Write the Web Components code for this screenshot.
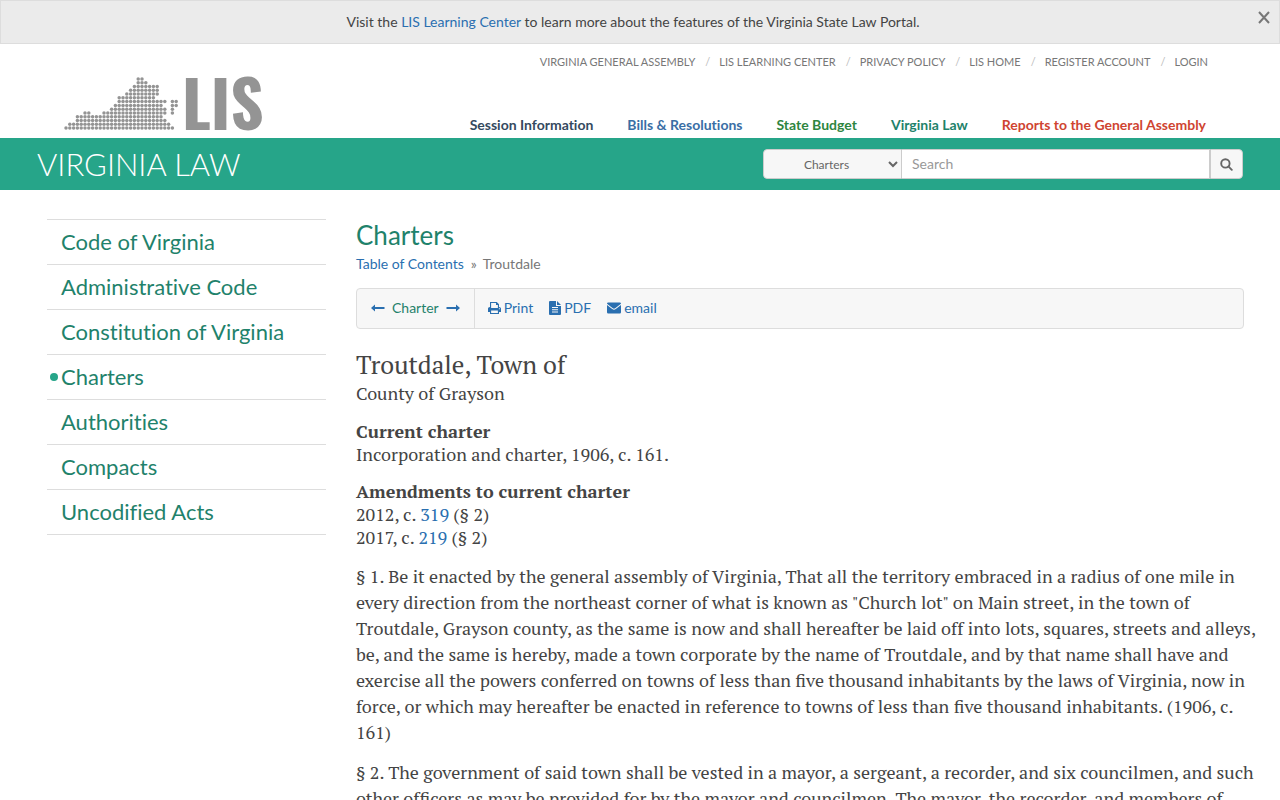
<!DOCTYPE html>
<html lang="en">
<head>
<meta charset="utf-8">
<meta name="viewport" content="width=device-width, initial-scale=1">
<title>Troutdale, Town of - Virginia Law</title>
<style>
body {
    margin: 0;
    background-color: #ffffff;
    color: #444444;
    font-family: Lato, sans-serif;
    font-size: 14px;
    font-variant-ligatures: none;
    line-height: 20px;
}
</style>
</head>
<body>

<notice-banner>Visit the <a href="#learn">LIS Learning Center</a> to learn more about the features of the Virginia State Law Portal.</notice-banner>

<site-header>
    <a slot="utility" href="#vga">Virginia General Assembly</a>
    <a slot="utility" href="#learn">LIS Learning Center</a>
    <a slot="utility" href="#privacy">Privacy Policy</a>
    <a slot="utility" href="#home">LIS Home</a>
    <a slot="utility" href="#register">Register Account</a>
    <a slot="utility" href="#login">Login</a>
    <a slot="portal" href="#session" style="color: #34495e">Session Information</a>
    <a slot="portal" href="#bills" style="color: #3a6ea5">Bills &amp; Resolutions</a>
    <a slot="portal" href="#budget" style="color: #2e8540">State Budget</a>
    <a slot="portal" href="#law" style="color: #1f826b">Virginia Law</a>
    <a slot="portal" href="#reports" style="color: #cf4431">Reports to the General Assembly</a>
</site-header>

<search-bar heading="VIRGINIA LAW"></search-bar>

<page-layout>
    <side-menu slot="side">
        <menu-item href="#code">Code of Virginia</menu-item>
        <menu-item href="#admin">Administrative Code</menu-item>
        <menu-item href="#constitution">Constitution of Virginia</menu-item>
        <menu-item href="#charters" active>Charters</menu-item>
        <menu-item href="#authorities">Authorities</menu-item>
        <menu-item href="#compacts">Compacts</menu-item>
        <menu-item href="#acts">Uncodified Acts</menu-item>
    </side-menu>
    <page-title>
        Charters
        <a slot="crumb" href="#toc">Table of Contents</a>
        <span slot="crumb">Troutdale</span>
    </page-title>
    <doc-toolbar></doc-toolbar>
    <charter-text>
        <h2 slot="title">Troutdale, Town of</h2>
        <span slot="place">County of Grayson</span>
        <charter-note label="Current charter">Incorporation and charter, 1906, c. 161.</charter-note>
        <charter-note label="Amendments to current charter">2012, c. <a href="#319">319</a> (§ 2)<br>2017, c. <a href="#219">219</a> (§ 2)</charter-note>
        <p>§ 1. Be it enacted by the general assembly of Virginia, That all the territory embraced in a radius of one mile in every direction from the northeast corner of what is known as "Church lot" on Main street, in the town of Troutdale, Grayson county, as the same is now and shall hereafter be laid off into lots, squares, streets and alleys, be, and the same is hereby, made a town corporate by the name of Troutdale, and by that name shall have and exercise all the powers conferred on towns of less than five thousand inhabitants by the laws of Virginia, now in force, or which may hereafter be enacted in reference to towns of less than five thousand inhabitants. (1906, c. 161)</p>
        <p>§ 2. The government of said town shall be vested in a mayor, a sergeant, a recorder, and six councilmen, and such other officers as may be provided for by the mayor and councilmen. The mayor, the recorder, and members of</p>
    </charter-text>
</page-layout>

<script>
function attach(host, html) {
    const template = document.createElement('template');
    template.innerHTML = html;
    const shadow = host.attachShadow({ mode: 'open' });
    shadow.append(template.content.cloneNode(true));
    return shadow;
}

class NoticeBanner extends HTMLElement {
    constructor() {
        super();
        const shadow = attach(this, `
<style>
:host {
    display: flex;
    align-items: flex-start;
    box-sizing: border-box;
    height: 44px;
    padding: 11px 8px 0;
    background-color: #ebebeb;
    border: 1px solid #dddddd;
}
:host([hidden]) {
    display: none;
}
p {
    flex: 1;
    margin: 0;
    text-align: center;
}
::slotted(a) {
    color: #2a6fb0;
    text-decoration: none;
}
button {
    padding: 0;
    margin-top: -2px;
    border: none;
    background: none;
    color: #777777;
    line-height: 0;
}
</style>
<p><slot></slot></p>
<button type="button" aria-label="Close">
    <svg width="14" height="14" viewBox="0 0 14 14" fill="none" stroke="currentColor" stroke-width="2"><path d="M2 2 12 13M12 2 2 13"/></svg>
</button>
`);
        shadow.querySelector('button').addEventListener('click', () => {
            this.hidden = true;
        });
    }
}

// [row, first column, last column] of each run of dots
const MAP_RUNS = [
    [0, 19, 20], [1, 19, 21], [2, 18, 24], [3, 17, 24], [4, 16, 24],
    [5, 14, 23], [6, 14, 26], [6, 28, 29], [7, 13, 25], [7, 28, 29],
    [8, 12, 26], [8, 28, 28], [9, 5, 6], [9, 10, 26], [9, 28, 28],
    [10, 3, 25], [11, 3, 26], [12, 1, 27], [13, 0, 28]
];

class LisLogo extends HTMLElement {
    constructor() {
        super();
        const shadow = attach(this, `
<style>
:host {
    display: block;
}
svg {
    display: block;
    overflow: visible;
}
text {
    font: bold 65px Oswald, "Liberation Sans", sans-serif;
}
</style>
<svg width="206" height="56" viewBox="0 0 206 56" fill="#949494" role="img" aria-label="LIS">
    <g></g>
    <text x="118" y="54">LIS</text>
</svg>
`);
        const dots = MAP_RUNS.map(([row, from, to]) => {
            let run = '';
            for (let col = from; col <= to; col++) {
                run += `<circle cx="${2 + col * 3.8}" cy="${3 + row * 3.77}" r="1.75"/>`;
            }
            return run;
        });
        shadow.querySelector('g').innerHTML = dots.join('');
    }
}

class SiteHeader extends HTMLElement {
    constructor() {
        super();
        attach(this, `
<style>
:host {
    display: flex;
    justify-content: space-between;
    box-sizing: border-box;
    height: 94px;
    padding: 8px 74px 0 64px;
}
lis-logo {
    margin-top: 24px;
}
.links {
    display: flex;
    flex-direction: column;
    justify-content: space-between;
    align-items: flex-end;
}
nav {
    display: flex;
    white-space: nowrap;
}
.utility {
    margin-right: -2px;
    font-size: 11px;
    text-transform: uppercase;
}
.portal {
    gap: 34px;
    padding-bottom: 3px;
    font-weight: bold;
}
::slotted(a) {
    text-decoration: none;
}
::slotted(a[slot='utility']) {
    color: #777777;
}
::slotted(a[slot='utility']:not(:first-child))::before {
    content: '/';
    padding: 0 9px 0 10px;
    color: #bbbbbb;
}
</style>
<lis-logo></lis-logo>
<div class="links">
    <nav class="utility" aria-label="Site"><slot name="utility"></slot></nav>
    <nav class="portal" aria-label="Portals"><slot name="portal"></slot></nav>
</div>
`);
    }
}

class SearchBar extends HTMLElement {
    constructor() {
        super();
        const shadow = attach(this, `
<style>
:host {
    display: flex;
    align-items: center;
    justify-content: space-between;
    box-sizing: border-box;
    height: 52px;
    padding: 0 37px;
    background-color: #26a589;
}
h1 {
    margin: 0;
    color: #ffffff;
    font-size: 31px;
    font-weight: 300;
    line-height: 40px;
}
form {
    display: flex;
    width: 480px;
    height: 30px;
    border-radius: 4px;
    overflow: hidden;
}
select,
input,
button {
    box-sizing: border-box;
    height: 30px;
    margin: 0;
    border: 1px solid #cccccc;
    border-radius: 0;
    font-family: inherit;
}
select {
    width: 139px;
    padding: 0;
    background-color: #f7f7f7;
    border-radius: 4px 0 0 4px;
    color: #666666;
    font-size: 12px;
    text-align: center;
}
input {
    flex: 1;
    min-width: 0;
    padding: 0 10px 2px;
    border-left: none;
    background-color: #ffffff;
    font-size: 14px;
}
input::placeholder {
    color: #999999;
}
button {
    display: flex;
    align-items: center;
    justify-content: center;
    width: 33px;
    padding: 0;
    background-color: #f7f7f7;
    border-radius: 0 4px 4px 0;
    color: #666666;
}
</style>
<h1></h1>
<form role="search">
    <select aria-label="Collection"><option>Charters</option></select>
    <input type="text" placeholder="Search" aria-label="Search">
    <button type="submit" aria-label="Run search">
        <svg width="13" height="13" viewBox="0 0 13 13" fill="none" stroke="currentColor" stroke-width="1.9"><circle cx="5.4" cy="5.4" r="4.2"/><path d="m8.4 8.4 3.4 3.4" stroke-linecap="round"/></svg>
    </button>
</form>
`);
        shadow.querySelector('form').addEventListener('submit', (e) => e.preventDefault());
        shadow.querySelector('h1').textContent = this.getAttribute('heading');
    }
}

class PageLayout extends HTMLElement {
    constructor() {
        super();
        attach(this, `
<style>
:host {
    display: grid;
    grid-template-columns: 279px minmax(0, 1fr);
    gap: 30px;
    padding: 29px 12px 0 47px;
}
</style>
<slot name="side"></slot>
<main><slot></slot></main>
`);
    }
}

class SideMenu extends HTMLElement {
    constructor() {
        super();
        attach(this, `
<style>
:host {
    display: block;
}
nav {
    border-bottom: 1px solid #dddddd;
}
</style>
<nav aria-label="Law library"><slot></slot></nav>
`);
    }
}

class MenuItem extends HTMLElement {
    constructor() {
        super();
        const shadow = attach(this, `
<style>
:host {
    display: block;
    border-top: 1px solid #dddddd;
}
a {
    display: flex;
    align-items: center;
    height: 44px;
    color: #1f826b;
    font-size: 22px;
    text-decoration: none;
}
a::before {
    content: '';
    width: 8px;
    height: 8px;
    margin: 0 3px;
    border-radius: 50%;
}
:host([active]) a::before {
    background-color: #26a589;
}
</style>
<a><slot></slot></a>
`);
        shadow.querySelector('a').href = this.getAttribute('href');
    }
}

class PageTitle extends HTMLElement {
    constructor() {
        super();
        attach(this, `
<style>
:host {
    display: block;
}
h1 {
    margin: 0;
    color: #1f826b;
    font-size: 26px;
    font-weight: normal;
    line-height: 32px;
}
nav {
    margin-top: 3px;
    color: #777777;
}
::slotted(a) {
    color: #2a6fb0;
    text-decoration: none;
}
::slotted(span)::before {
    content: '»';
    padding: 0 6px 0 7px;
}
</style>
<h1><slot></slot></h1>
<nav aria-label="Breadcrumb"><slot name="crumb"></slot></nav>
`);
    }
}

class DocToolbar extends HTMLElement {
    constructor() {
        super();
        attach(this, `
<style>
:host {
    display: flex;
    box-sizing: border-box;
    height: 41px;
    margin: 14px 24px 0 0;
    background-color: #f7f7f7;
    border: 1px solid #dddddd;
    border-radius: 4px;
}
div {
    display: flex;
    align-items: center;
    padding: 0 14px 2px;
}
.pager {
    gap: 7px;
    border-right: 1px solid #dddddd;
    color: #1f826b;
}
.actions {
    gap: 16px;
    padding-left: 13px;
}
a {
    display: flex;
    align-items: center;
    gap: 3px;
    color: #2a6fb0;
    text-decoration: none;
}
svg {
    fill: currentColor;
}
</style>
<div class="pager">
    <a href="#previous" aria-label="Previous charter"><svg width="14" height="8" viewBox="0 0 14 8"><path d="M0 4 4 .5V3h9.5v2H4v2.5z"/></svg></a>
    <span>Charter</span>
    <a href="#next" aria-label="Next charter"><svg width="14" height="8" viewBox="0 0 14 8"><path d="M14 4 10 .5V3H.5v2H10v2.5z"/></svg></a>
</div>
<div class="actions">
    <a href="#print"><svg width="13" height="12" viewBox="0 0 13 12"><path fill-rule="evenodd" d="M2 0h6.8L11 2.200V5c1.200 0 2 .8 2 1.800V10h-2v2H2v-2H0V6.800C0 5.800.8 5 2 5zm1.100 1.100V6h6.800V3H8V1.100zM3.100 8.500v2.400h6.800V8.500zm7.800-2.200v1h1v-1z"/></svg>Print</a>
    <a href="#pdf"><svg width="12" height="14" viewBox="0 0 12 14"><path fill-rule="evenodd" d="M1 0h6v5h5v8q0 1-1 1H1q-1 0-1-1V1Q0 0 1 0zm7 0 4 4H8zM3 6v1h6V6zm0 2.200v1h6v-1zm0 2.200v1h6v-1z"/></svg>PDF</a>
    <a href="#email"><svg width="14" height="12" viewBox="0 0 14 12"><path d="M1.200.500h11.600q1.200 0 1.200 1.200L8.200 6.200q-1.200.9-2.400 0L0 1.700Q0 .5 1.200.5zM0 3l5.200 4q1.800 1.300 3.600 0L14 3v7.300q0 1.200-1.200 1.200H1.200Q0 11.500 0 10.300z"/></svg>email</a>
</div>
`);
    }
}

class CharterText extends HTMLElement {
    constructor() {
        super();
        attach(this, `
<style>
:host {
    display: block;
    margin-top: 21px;
    font-family: "PT Serif", "Liberation Serif", serif;
    font-size: 18px;
    font-variant-ligatures: normal;
    line-height: 26px;
}
::slotted(h2) {
    margin: 0;
    font-size: 25px;
    font-weight: normal;
    line-height: 30px;
}
::slotted(p) {
    margin: 14px 0;
}
</style>
<slot name="title"></slot>
<slot name="place"></slot>
<slot></slot>
`);
    }
}

class CharterNote extends HTMLElement {
    constructor() {
        super();
        const shadow = attach(this, `
<style>
:host {
    display: block;
    margin: 13px 0;
    line-height: 23px;
}
::slotted(a) {
    color: #2a6fb0;
    text-decoration: none;
}
strong {
    display: block;
    line-height: 24px;
}
</style>
<strong></strong>
<slot></slot>
`);
        shadow.querySelector('strong').textContent = this.getAttribute('label');
    }
}

window.customElements.define('notice-banner', NoticeBanner);
window.customElements.define('lis-logo', LisLogo);
window.customElements.define('site-header', SiteHeader);
window.customElements.define('search-bar', SearchBar);
window.customElements.define('page-layout', PageLayout);
window.customElements.define('side-menu', SideMenu);
window.customElements.define('menu-item', MenuItem);
window.customElements.define('page-title', PageTitle);
window.customElements.define('doc-toolbar', DocToolbar);
window.customElements.define('charter-text', CharterText);
window.customElements.define('charter-note', CharterNote);
</script>
</body>
</html>
